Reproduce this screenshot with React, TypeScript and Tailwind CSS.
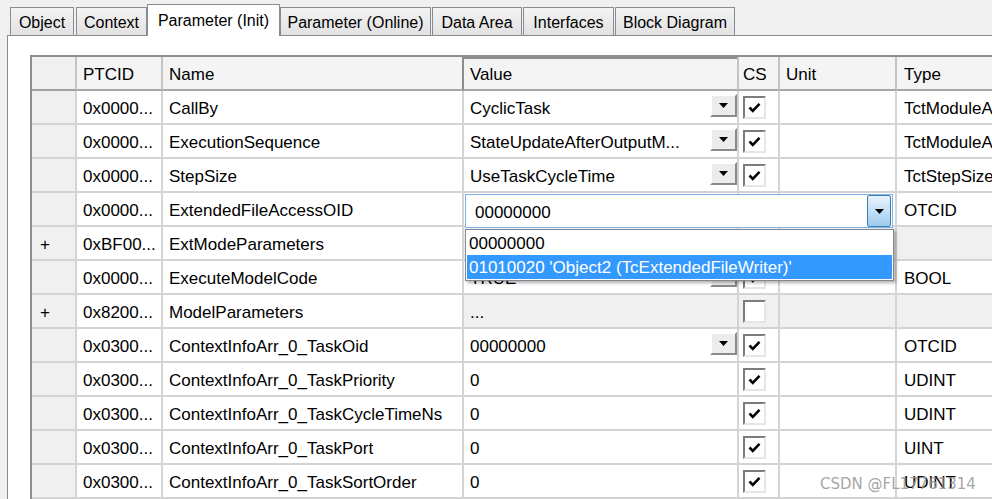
import { clsx } from 'clsx';

type Row = {
  plus?: boolean;
  id: string;
  name: string;
  value: string;
  drop?: boolean;
  combo?: boolean;
  cs: 'on' | 'off' | 'none';
  type: string;
  gray?: boolean;
};

const rows: Row[] = [
  { id: '0x0000...', name: 'CallBy', value: 'CyclicTask', drop: true, cs: 'on', type: 'TctModuleAccess' },
  { id: '0x0000...', name: 'ExecutionSequence', value: 'StateUpdateAfterOutputM...', drop: true, cs: 'on', type: 'TctModuleAccess' },
  { id: '0x0000...', name: 'StepSize', value: 'UseTaskCycleTime', drop: true, cs: 'on', type: 'TctStepSizeType' },
  { id: '0x0000...', name: 'ExtendedFileAccessOID', value: '00000000', combo: true, cs: 'none', type: 'OTCID' },
  { plus: true, id: '0xBF00...', name: 'ExtModeParameters', value: '', cs: 'none', type: '', gray: true },
  { id: '0x0000...', name: 'ExecuteModelCode', value: 'TRUE', drop: true, cs: 'on', type: 'BOOL' },
  { plus: true, id: '0x8200...', name: 'ModelParameters', value: '...', cs: 'off', type: '', gray: true },
  { id: '0x0300...', name: 'ContextInfoArr_0_TaskOid', value: '00000000', drop: true, cs: 'on', type: 'OTCID' },
  { id: '0x0300...', name: 'ContextInfoArr_0_TaskPriority', value: '0', cs: 'on', type: 'UDINT' },
  { id: '0x0300...', name: 'ContextInfoArr_0_TaskCycleTimeNs', value: '0', cs: 'on', type: 'UDINT' },
  { id: '0x0300...', name: 'ContextInfoArr_0_TaskPort', value: '0', cs: 'on', type: 'UINT' },
  { id: '0x0300...', name: 'ContextInfoArr_0_TaskSortOrder', value: '0', cs: 'on', type: 'UDINT' },
];

const tabs = [
  { label: 'Object', cls: 'ml-[10px] w-[64px]' },
  { label: 'Context', cls: 'ml-[2px] w-[71px]' },
  { label: 'Parameter (Init)', cls: 'w-[133px]', active: true },
  { label: 'Parameter (Online)', cls: 'w-[151px]' },
  { label: 'Data Area', cls: 'ml-[1px] w-[90px]' },
  { label: 'Interfaces', cls: 'ml-[1px] w-[91px]' },
  { label: 'Block Diagram', cls: 'ml-[1px] w-[120px]' },
];

function Arrow() {
  return (
    <svg width="9" height="5" viewBox="0 0 9 5">
      <polygon points="0,0 9,0 4.5,5" fill="#000" />
    </svg>
  );
}

function DropButton() {
  return (
    <div className="mb-[4px] flex h-[23px] w-[27px] shrink-0 items-center justify-center border-2 border-t-white border-l-white border-r-[#8a8a8a] border-b-[#8a8a8a] bg-[#ececec]">
      <Arrow />
    </div>
  );
}

function CheckBox({ checked }: { checked: boolean }) {
  return (
    <div className="flex h-[23px] w-[23px] items-center justify-center border-2 border-t-[#7c7c7c] border-l-[#7c7c7c] border-r-[#e6e6e6] border-b-[#e6e6e6] bg-white">
      {checked && (
        <svg width="13" height="11" viewBox="0 0 13 11">
          <path d="M1.5 5.5 L4.8 8.8 L11.5 1.8" stroke="#000" strokeWidth="2.6" fill="none" />
        </svg>
      )}
    </div>
  );
}

const cell = 'flex h-[34px] items-center whitespace-nowrap border-b-2 border-r-2 border-[#d4d4d4]';
const txt = 'pt-[3px]';

export default function App() {
  return (
    <div className="relative h-[499px] w-[992px] overflow-hidden bg-[#f0f0f0] font-['Liberation_Sans',Arial,sans-serif] text-black">
      {/* tab strip */}
      <div className="flex h-[35px] items-end">
        {tabs.map((t) =>
          t.active ? (
            <div
              key={t.label}
              className={clsx(
                'relative z-10 -mb-px flex h-[32px] items-start justify-center border border-b-0 border-[#898c95] bg-white pt-[4px] text-[16px]',
                t.cls,
              )}
            >
              {t.label}
            </div>
          ) : (
            <div
              key={t.label}
              className={clsx(
                'flex h-[28px] items-center justify-center border border-b-0 border-[#898c95] bg-gradient-to-b from-[#f3f3f3] to-[#e2e2e2] pt-[2px] text-[16px]',
                t.cls,
              )}
            >
              {t.label}
            </div>
          ),
        )}
      </div>

      {/* panel */}
      <div className="ml-[7px] h-[470px] border-l border-t border-[#898c95] bg-white pl-[22px] pt-[19px]">
        <div className="grid w-[1000px] grid-cols-[45px_86px_301px_275px_41px_117px_135px] border-l-2 border-t-2 border-[#8e8e8e] text-[17px]">
          {/* header */}
          <div className={clsx(cell, 'bg-[#f0f0f0] border-b-[#a0a0a0] border-r-[#c4c4c4]')} />
          <div className={clsx(cell, txt, 'bg-[#f4f4f4] border-b-[#a8a8a8] border-r-[#c4c4c4] pl-[6px]')}>PTCID</div>
          <div className={clsx(cell, txt, 'bg-[#f4f4f4] border-b-[#a8a8a8] border-r-[#8c8c8c] pl-[6px]')}>Name</div>
          <div className={clsx(cell, txt, 'bg-[#f4f4f4] border-b-[#a8a8a8] border-r-[#c4c4c4] pl-[6px] shadow-[inset_0_2px_0_#8c8c8c]')}>Value</div>
          <div className={clsx(cell, txt, 'bg-[#f4f4f4] border-b-[#a8a8a8] border-r-[#c4c4c4] pl-[4px]')}>CS</div>
          <div className={clsx(cell, txt, 'bg-[#f4f4f4] border-b-[#a8a8a8] border-r-[#c4c4c4] pl-[6px]')}>Unit</div>
          <div className={clsx(cell, txt, 'bg-[#f4f4f4] border-b-[#a8a8a8] border-r-[#c4c4c4] pl-[7px]')}>Type</div>

          {rows.map((r, i) => {
            const g = r.gray ? 'bg-[#f0f0f0]' : 'bg-white';
            return (
              <div key={i} className="contents">
                <div className={clsx(cell, txt, 'bg-[#f0f0f0] pl-[8px]')}>{r.plus ? '+' : ''}</div>
                <div className={clsx(cell, txt, 'bg-white pl-[6px]')}>{r.id}</div>
                <div className={clsx(cell, txt, 'overflow-hidden bg-white pl-[6px]')}>{r.name}</div>
                <div className={clsx(cell, 'relative pl-[6px]', g, r.combo ? 'z-20' : 'overflow-hidden')}>
                  {r.combo ? (
                    <>
                      <div className="absolute left-[1px] top-[1px] flex h-[34px] w-[428px] items-center border border-[#7eb4ea] bg-white pl-[9px]">
                        <span className={clsx('flex-1', txt)}>00000000</span>
                        <div className="mr-px flex h-[32px] w-[24px] items-center justify-center rounded-[2px] border border-[#3c7fb1] bg-gradient-to-b from-[#e8f3fc] via-[#c4e0f7] to-[#9ccaee]">
                          <Arrow />
                        </div>
                      </div>
                      <div className="absolute left-[1px] top-[36px] flex w-[429px] flex-col border border-[#828790] bg-white p-px shadow-[2px_2px_3px_rgba(0,0,0,0.3)]">
                        <div className="flex h-[24px] items-center pl-[2px] pt-[2px]">00000000</div>
                        <div className="flex h-[24px] items-center bg-[#3399ff] pl-[2px] pt-[2px] text-white">
                          01010020 'Object2 (TcExtendedFileWriter)'
                        </div>
                      </div>
                    </>
                  ) : (
                    <>
                      <span className={clsx('flex-1 overflow-hidden', txt)}>{r.value}</span>
                      {r.drop && <DropButton />}
                    </>
                  )}
                </div>
                <div className={clsx(cell, 'pl-[4px]', g)}>
                  {r.cs !== 'none' && <CheckBox checked={r.cs === 'on'} />}
                </div>
                <div className={clsx(cell, g)} />
                <div className={clsx(cell, txt, 'overflow-hidden pl-[7px]', g)}>{r.type}</div>
              </div>
            );
          })}
        </div>
      </div>

      <div className="pointer-events-none absolute left-[820px] top-[473px] font-['DejaVu_Sans',sans-serif] text-[15px] text-[#9a9a9a]/90">
        CSDN @FL17761314
      </div>
    </div>
  );
}
